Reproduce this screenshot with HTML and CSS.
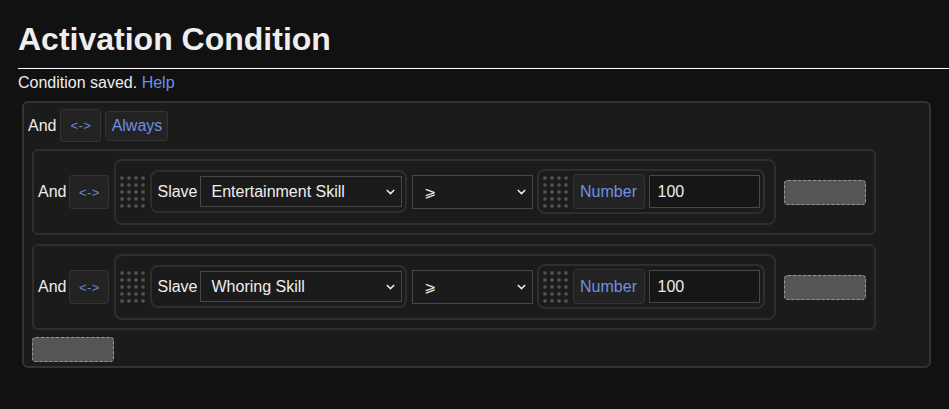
FILE: index.html
```html
<!DOCTYPE html>
<html>
<head>
<meta charset="utf-8">
<link rel="stylesheet" href="styles.css">
</head>
<body>
<h1 class="title">Activation Condition</h1>
<p class="status">Condition saved. <a class="link">Help</a></p>
<div class="root">
  <div class="row-head">
    <span class="lbl">And</span>
    <button class="btn swap">&lt;-&gt;</button>
    <button class="btn always">Always</button>
  </div>
  <div class="groups">
    <div class="group">
      <span class="lbl">And</span>
      <button class="btn swap">&lt;-&gt;</button>
      <div class="rule">
        <span class="grip"></span>
        <div class="slot slave-slot">
          <span class="lbl">Slave</span>
          <div class="select wide"><span>Entertainment Skill</span><svg class="chev" width="9" height="6" viewBox="0 0 9 6"><polyline points="0.8,1 4.5,4.6 8.2,1" fill="none" stroke="#eee" stroke-width="1.5"/></svg></div>
        </div>
        <div class="select op"><span class="opglyph">⩾</span><svg class="chev" width="9" height="6" viewBox="0 0 9 6"><polyline points="0.8,1 4.5,4.6 8.2,1" fill="none" stroke="#eee" stroke-width="1.5"/></svg></div>
        <div class="slot num-slot">
          <span class="grip"></span>
          <button class="btn numbtn">Number</button>
          <div class="input">100</div>
        </div>
      </div>
      <div class="drop"></div>
    </div>
    <div class="group">
      <span class="lbl">And</span>
      <button class="btn swap">&lt;-&gt;</button>
      <div class="rule">
        <span class="grip"></span>
        <div class="slot slave-slot">
          <span class="lbl">Slave</span>
          <div class="select wide"><span>Whoring Skill</span><svg class="chev" width="9" height="6" viewBox="0 0 9 6"><polyline points="0.8,1 4.5,4.6 8.2,1" fill="none" stroke="#eee" stroke-width="1.5"/></svg></div>
        </div>
        <div class="select op"><span class="opglyph">⩾</span><svg class="chev" width="9" height="6" viewBox="0 0 9 6"><polyline points="0.8,1 4.5,4.6 8.2,1" fill="none" stroke="#eee" stroke-width="1.5"/></svg></div>
        <div class="slot num-slot">
          <span class="grip"></span>
          <button class="btn numbtn">Number</button>
          <div class="input">100</div>
        </div>
      </div>
      <div class="drop"></div>
    </div>
    <div class="add"></div>
  </div>
</div>
</body>
</html>
```
FILE: styles.css
```css
body {
  margin: 0;
  padding: 21px 18px 0 18px;
  background: #111;
  color: #eee;
  font-family: "Liberation Sans", Arial, sans-serif;
  font-size: 16px;
}
.title {
  margin: 0 -18px 0 0;
  font-size: 32px;
  line-height: 37px;
  font-weight: bold;
  padding-bottom: 10px;
  border-bottom: 1px solid #fff;
}
.status {
  margin: 5px 0 0 0;
  line-height: 18px;
}
.link {
  color: #6e8ee6;
  cursor: pointer;
}
.root {
  margin: 9px 0 0 4px;
  border: 2px solid #333;
  border-radius: 6px;
  background: #1b1b1b;
  padding: 6px 4px 4px 4px;
}
.row-head {
  display: flex;
  align-items: center;
}
.lbl {
  margin-right: 3px;
  white-space: nowrap;
}
.row-head .lbl {
  margin-right: 4px;
}
.btn {
  box-sizing: border-box;
  background: #232323;
  border: 1px solid #333;
  border-radius: 3px;
  color: #7090e0;
  font-family: inherit;
  font-size: 16px;
  padding: 0;
  display: flex;
  align-items: center;
  justify-content: center;
  flex: none;
}
.swap {
  width: 41px;
  height: 33px;
  font-size: 13px;
  letter-spacing: 0.5px;
  color: #6a86dc;
  font-weight: 300;
}
.always {
  width: 63px;
  height: 30px;
  margin-left: 4px;
}
.groups {
  margin: 7px 0 0 4px;
}
.group {
  display: flex;
  align-items: center;
  width: fit-content;
  border: 2px solid #2e2e2e;
  border-radius: 6px;
  padding: 8px 8px 8px 4px;
}
.group + .group {
  margin-top: 9px;
}
.group .swap {
  width: 40px;
  height: 34px;
  margin-right: 5px;
}
.rule {
  display: flex;
  align-items: center;
  border: 2px solid #2e2e2e;
  border-radius: 8px;
  padding: 8px 9px 9px 4px;
}
.grip {
  flex: none;
  width: 25px;
  height: 32px;
  background: radial-gradient(circle, #555 1.6px, transparent 2.2px) -1.5px -1.5px / 7px 7px;
  margin-right: 5px;
}
.slot {
  display: flex;
  align-items: center;
  box-sizing: border-box;
  border: 2px solid #2e2e2e;
  border-radius: 8px;
}
.slave-slot {
  height: 43px;
  padding: 0 3px 0 5px;
}
.slave-slot .lbl {
  margin-right: 2px;
}
.select {
  display: flex;
  align-items: center;
  justify-content: space-between;
  box-sizing: border-box;
  border: 1px solid #484848;
  background: #1b1b1b;
  flex: none;
}
.select.wide {
  width: 202px;
  height: 31px;
  padding: 0 6px 0 11px;
}
.select.op {
  width: 121px;
  height: 34px;
  margin: 0 4px 0 5px;
  padding: 0 6px 0 12px;
}
.opglyph {
  font-family: "DejaVu Sans", sans-serif;
  font-size: 14px;
}
.chev {
  display: block;
}
.num-slot {
  height: 45px;
  padding: 0 3px 0 4px;
}
.numbtn {
  width: 72px;
  height: 35px;
  margin-right: 4px;
}
.input {
  box-sizing: border-box;
  width: 111px;
  height: 33px;
  border: 1px solid #484848;
  background: #161616;
  padding-left: 8px;
  display: flex;
  align-items: center;
}
.drop {
  flex: none;
  box-sizing: border-box;
  width: 82px;
  height: 25px;
  margin-left: 8px;
  background: #555;
  border: 1px dashed #999;
  border-radius: 4px;
}
.add {
  box-sizing: border-box;
  width: 82px;
  height: 25px;
  margin-top: 7px;
  background: #555;
  border: 1px dashed #999;
  border-radius: 4px;
}
```
